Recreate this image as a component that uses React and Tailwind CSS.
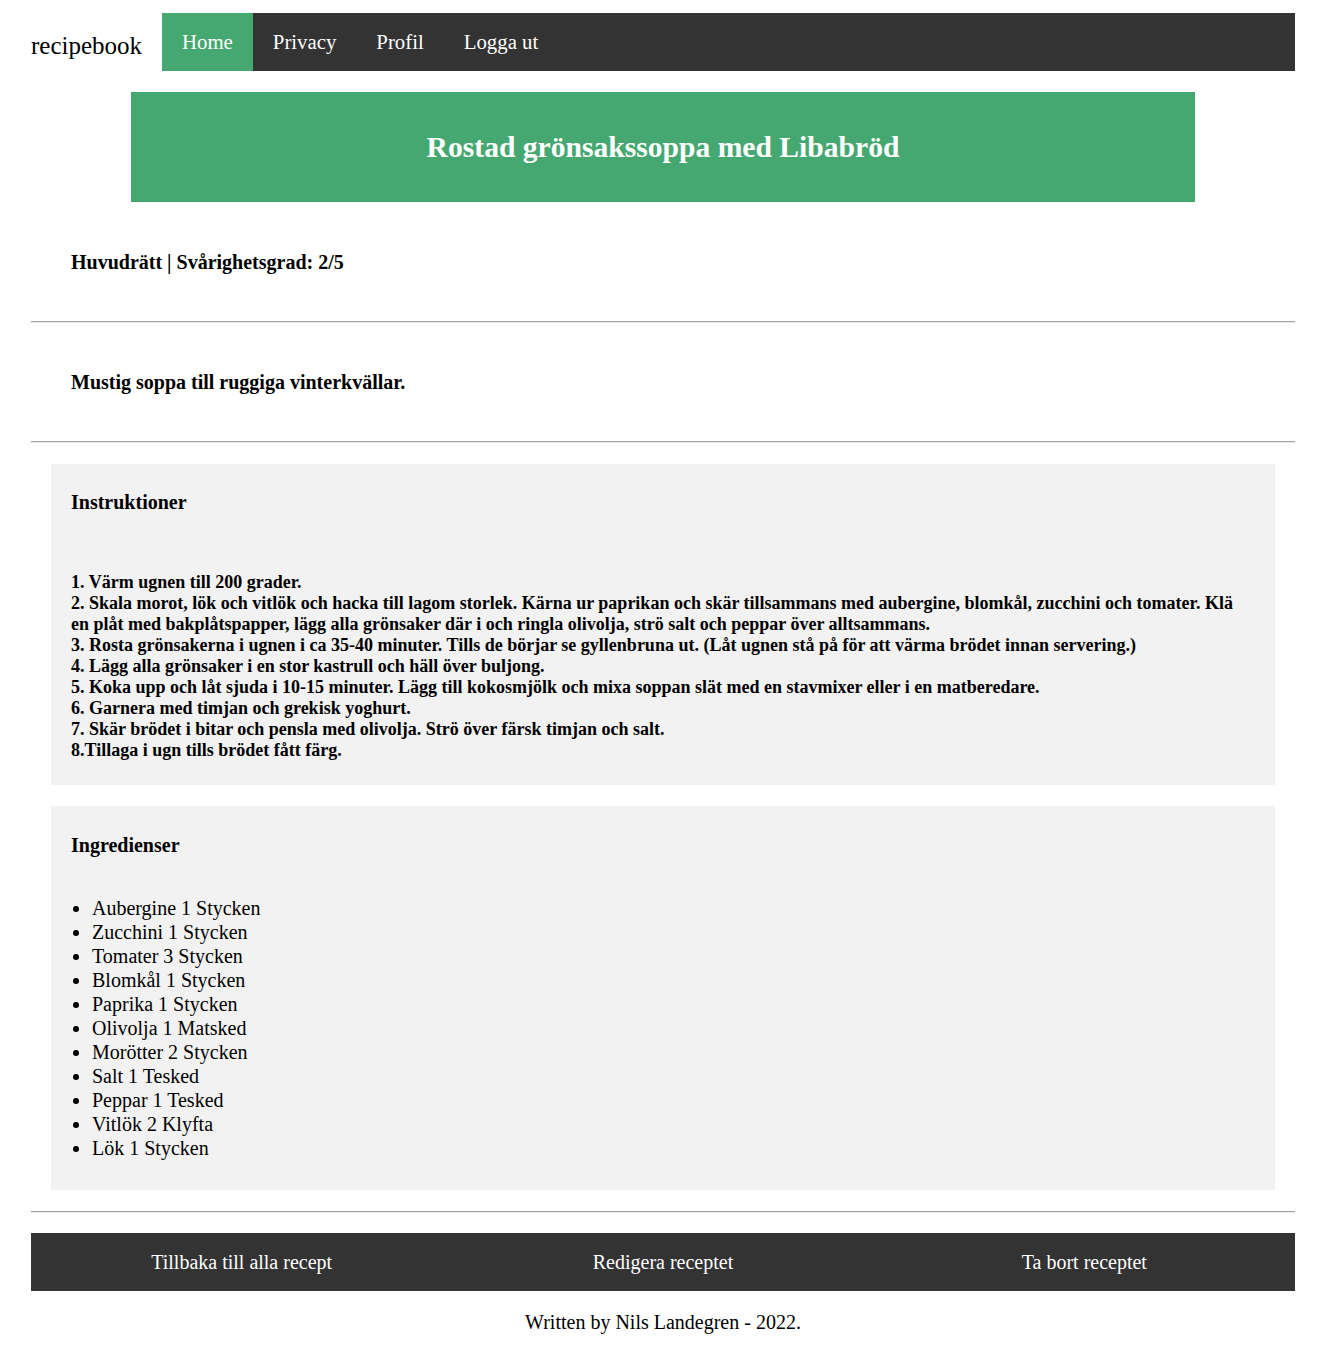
const ingredients = [
  "Aubergine 1 Stycken",
  "Zucchini 1 Stycken",
  "Tomater 3 Stycken",
  "Blomkål 1 Stycken",
  "Paprika 1 Stycken",
  "Olivolja 1 Matsked",
  "Morötter 2 Stycken",
  "Salt 1 Tesked",
  "Peppar 1 Tesked",
  "Vitlök 2 Klyfta",
  "Lök 1 Stycken",
];

const steps = [
  "1. Värm ugnen till 200 grader.",
  "2. Skala morot, lök och vitlök och hacka till lagom storlek. Kärna ur paprikan och skär tillsammans med aubergine, blomkål, zucchini och tomater. Klä en plåt med bakplåtspapper, lägg alla grönsaker där i och ringla olivolja, strö salt och peppar över alltsammans.",
  "3. Rosta grönsakerna i ugnen i ca 35-40 minuter. Tills de börjar se gyllenbruna ut. (Låt ugnen stå på för att värma brödet innan servering.)",
  "4. Lägg alla grönsaker i en stor kastrull och häll över buljong.",
  "5. Koka upp och låt sjuda i 10-15 minuter. Lägg till kokosmjölk och mixa soppan slät med en stavmixer eller i en matberedare.",
  "6. Garnera med timjan och grekisk yoghurt.",
  "7. Skär brödet i bitar och pensla med olivolja. Strö över färsk timjan och salt.",
  "8.Tillaga i ugn tills brödet fått färg.",
];

function Divider() {
  return <div className="h-[2px] border-t border-[#a3a3a3] bg-[#e8e8e8]" />;
}

export default function App() {
  return (
    <div className="min-h-[1351px] bg-white text-black font-['Liberation_Serif',serif]">
      <div className="ml-[31px] w-[1264px] pt-[13px]">
        {/* Header */}
        <div className="flex items-stretch">
          <div className="w-[131px] self-center pt-[6px] text-[25px] leading-none">recipebook</div>
          <nav className="flex flex-1 h-[58px] bg-[#333333] text-white text-[20.8px]">
            <a className="flex items-center px-[20px] bg-[#45a871]">Home</a>
            <a className="flex items-center px-[20px]">Privacy</a>
            <a className="flex items-center px-[20px]">Profil</a>
            <a className="flex items-center px-[20px]">Logga ut</a>
          </nav>
        </div>

        {/* Title banner */}
        <div className="mx-[100px] mt-[21px] h-[110px] flex items-center justify-center bg-[#45a871]">
          <h1 className="text-white font-bold text-[29.6px]">Rostad grönsakssoppa med Libabröd</h1>
        </div>

        <div className="pl-[40px] pt-[49px] pb-[47px] font-bold text-[20px] leading-[23px]">
          Huvudrätt | Svårighetsgrad: 2/5
        </div>
        <Divider />
        <div className="pl-[40px] pt-[48px] pb-[47px] font-bold text-[20px] leading-[23px]">
          Mustig soppa till ruggiga vinterkvällar.
        </div>
        <Divider />

        {/* Instructions */}
        <div className="mx-[20px] mt-[21px] bg-[#f2f2f2] px-[20px] pt-[27px] pb-[24px]">
          <h3 className="font-bold text-[20px] leading-[23px]">Instruktioner</h3>
          <div className="mt-[58px] font-bold text-[18px] leading-[21px]">
            {steps.map((s) => (
              <div key={s}>{s}</div>
            ))}
          </div>
        </div>

        {/* Ingredients */}
        <div className="mx-[20px] mt-[21px] bg-[#f2f2f2] px-[20px] pt-[28px] pb-[30px]">
          <h3 className="font-bold text-[20px] leading-[23px]">Ingredienser</h3>
          <ul className="mt-[39px] list-disc pl-[21px] text-[20px] leading-[24px]">
            {ingredients.map((i) => (
              <li key={i}>{i}</li>
            ))}
          </ul>
        </div>

        <div className="mt-[21px]">
          <Divider />
        </div>

        {/* Footer actions */}
        <div className="mt-[20px] grid grid-cols-3 h-[58px] bg-[#333333] text-white text-[20px]">
          <a className="flex items-center justify-center">Tillbaka till alla recept</a>
          <a className="flex items-center justify-center">Redigera receptet</a>
          <a className="flex items-center justify-center">Ta bort receptet</a>
        </div>

        <p className="mt-[20px] text-center text-[20px] leading-[23px]">Written by Nils Landegren - 2022.</p>
      </div>
    </div>
  );
}
